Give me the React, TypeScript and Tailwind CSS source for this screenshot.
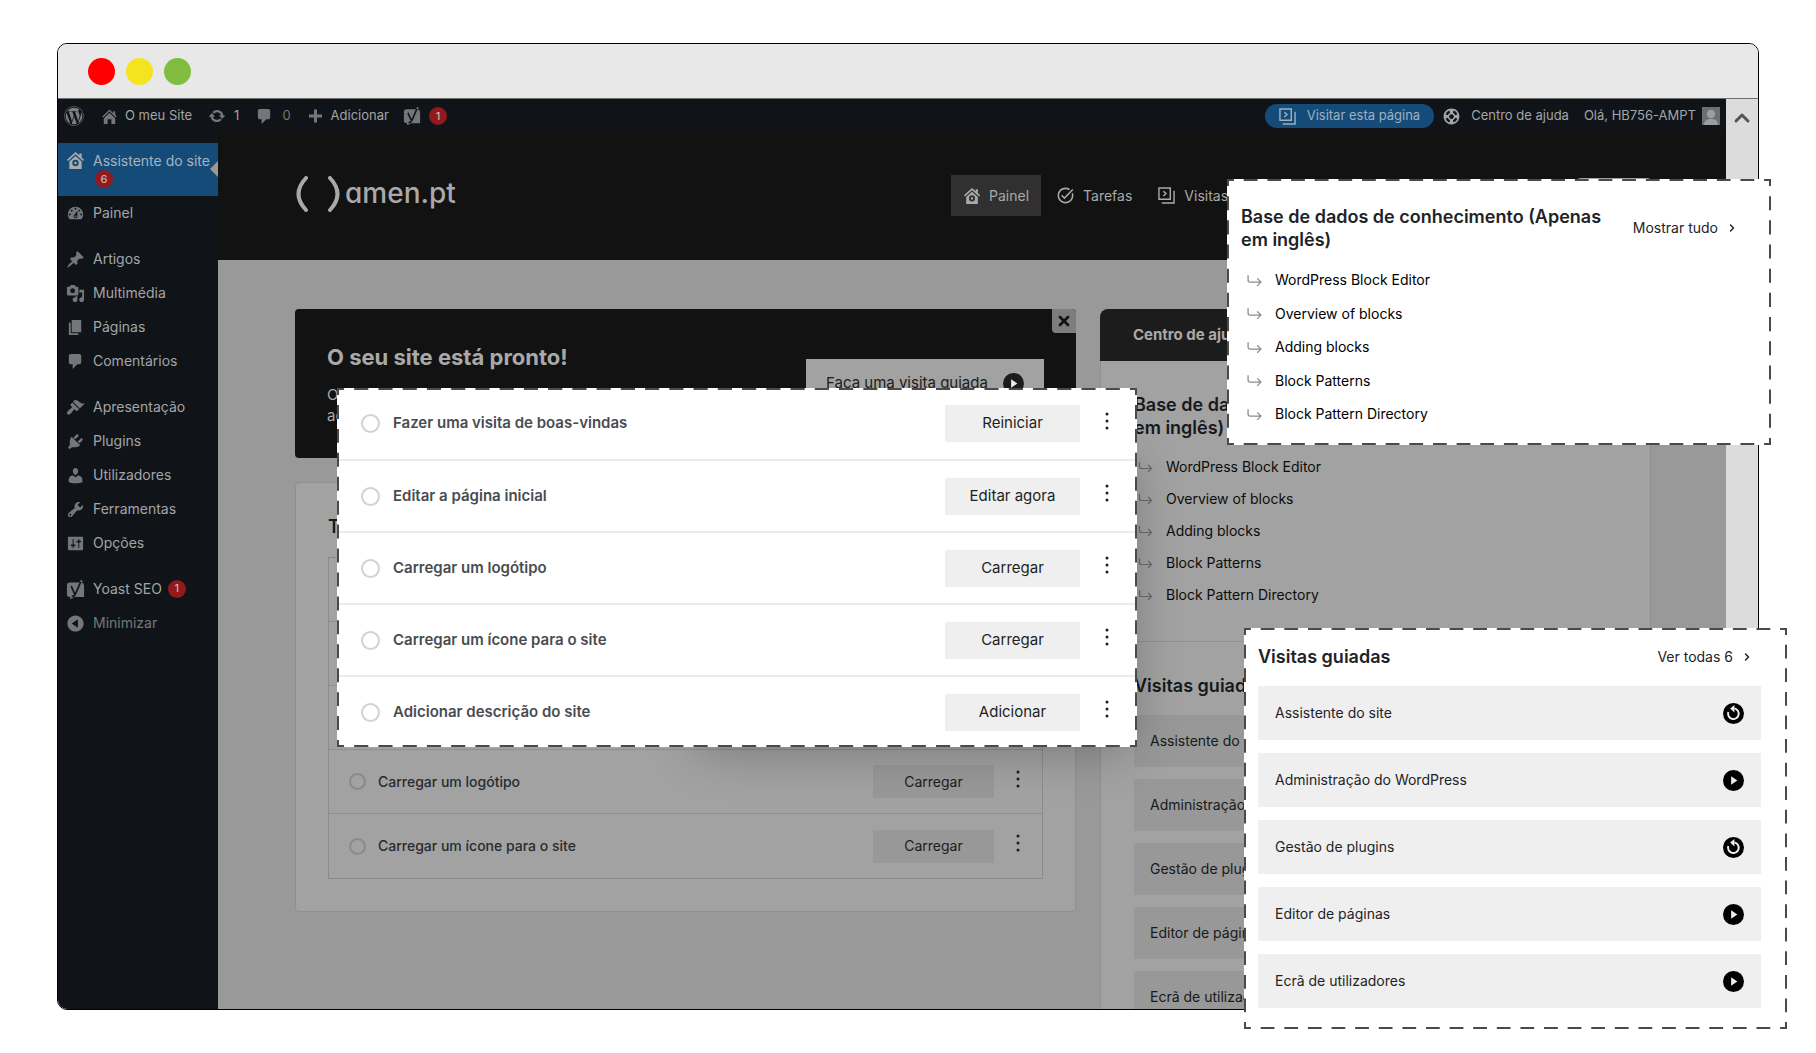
import type { ReactNode } from "react";
import { ChevronRight, ChevronUp, X } from "lucide-react";
import { FaWordpress } from "react-icons/fa";
import { MdSupport, MdTaskAlt } from "react-icons/md";

type IconProps = { className?: string };

const GLYPHS = {
  dashboard:
    "M3.76 16h12.48c1.1-1.37 1.76-3.11 1.76-5 0-4.42-3.58-8-8-8s-8 3.58-8 8c0 1.89.66 3.63 1.76 5zM10 4c.55 0 1 .45 1 1s-.45 1-1 1-1-.45-1-1 .45-1 1-1zM6 6c.55 0 1 .45 1 1s-.45 1-1 1-1-.45-1-1 .45-1 1-1zm8 0c.55 0 1 .45 1 1s-.45 1-1 1-1-.45-1-1 .45-1 1-1zm-5.37 5.55L12 7v6c0 1.1-.9 2-2 2s-2-.9-2-2c0-.57.24-1.08.63-1.45zM4 10c.55 0 1 .45 1 1s-.45 1-1 1-1-.45-1-1 .45-1 1-1zm12 0c.55 0 1 .45 1 1s-.45 1-1 1-1-.45-1-1 .45-1 1-1zm-5 3c0-.55-.45-1-1-1s-1 .45-1 1 .45 1 1 1 1-.45 1-1z",
  post: "M10.44 3.02l1.82-1.82 6.36 6.35-1.83 1.82c-1.05-.68-2.48-.57-3.41.36l-.75.75c-.92.93-1.04 2.35-.35 3.41l-1.83 1.82-2.41-2.41-2.8 2.79c-.42.42-3.38 2.71-3.8 2.29s1.86-3.39 2.28-3.81l2.79-2.79L4.1 9.36l1.83-1.82c1.05.69 2.48.57 3.4-.36l.75-.75c.93-.92 1.05-2.35.36-3.41z",
  media:
    "M13 11V4c0-.55-.45-1-1-1h-1.67L9 1H5L3.67 3H2c-.55 0-1 .45-1 1v7c0 .55.45 1 1 1h10c.55 0 1-.45 1-1zM7 4.5c1.38 0 2.5 1.12 2.5 2.5S8.38 9.5 7 9.5 4.5 8.38 4.5 7 5.62 4.5 7 4.5zM14 6h5v10.5c0 1.38-1.12 2.5-2.5 2.5S14 17.88 14 16.5s1.12-2.5 2.5-2.5c.17 0 .34.02.5.05V9h-3V6zm-4 8.05V13h2v3.5c0 1.38-1.12 2.5-2.5 2.5S7 17.88 7 16.5 8.12 14 9.5 14c.17 0 .34.02.5.05z",
  page: "M6 15V2h10v13H6zm-1 1h8v2H3V5h2v11z",
  comment:
    "M5 2h9c1.1 0 2 .9 2 2v7c0 1.1-.9 2-2 2h-2l-5 5v-5H5c-1.1 0-2-.9-2-2V4c0-1.1.9-2 2-2z",
  brush:
    "M14.48 11.06L7.41 3.99l1.5-1.5c.5-.56 2.3-.47 3.51.32 1.21.8 1.43 1.28 2.91 2.1 1.18.64 2.45 1.26 4.45.85zm-.71.71L6.7 4.7 4.93 6.47c-.39.39-.39 1.02 0 1.41l1.06 1.06c.39.39.39 1.03 0 1.42-.6.6-1.43 1.11-2.21 1.69-.35.26-.7.53-1.01.84C1.43 14.23.4 16.08 1.4 17.07c.99 1 2.84-.03 4.18-1.36.31-.31.58-.66.85-1.02.57-.78 1.08-1.61 1.69-2.21.39-.39 1.02-.39 1.41 0l1.06 1.06c.39.39 1.02.39 1.41 0z",
  plug: "M13.11 4.36L9.87 7.6 8 5.73l3.24-3.24c.35-.34 1.05-.2 1.56.32.52.51.66 1.21.31 1.55zm-8 1.77l.91-1.12 9.01 9.01-1.19.84c-.71.71-2.63 1.16-3.82 1.16H6.14L4.9 17.26c-.59.59-1.54.59-2.12 0-.59-.58-.59-1.53 0-2.12l1.24-1.24v-3.88c0-1.13.4-3.19 1.09-3.89zm7.26 3.97l3.24-3.24c.34-.35 1.04-.21 1.55.31.52.51.66 1.21.31 1.55l-3.24 3.25z",
  user: "M10 9.25c-2.27 0-2.73-3.44-2.73-3.44C7 4.02 7.82 2 9.97 2c2.16 0 2.98 2.02 2.71 3.81 0 0-.41 3.44-2.68 3.44zm0 2.57L12.72 10c2.39 0 4.52 2.33 4.52 4.53v2.49s-3.65 1.13-7.24 1.13c-3.65 0-7.24-1.13-7.24-1.13v-2.49c0-2.25 1.94-4.48 4.47-4.48z",
  wrench:
    "M16.68 9.77c-1.34 1.34-3.3 1.67-4.95.99l-5.41 6.52c-.99.99-2.59.99-3.58 0s-.99-2.59 0-3.57l6.52-5.42c-.68-1.65-.35-3.61.99-4.95 1.28-1.28 3.12-1.62 4.72-1.06l-2.89 2.89 2.82 2.82 2.86-2.87c.53 1.58.18 3.39-1.08 4.65zM3.81 16.21c.4.39 1.04.39 1.43 0 .4-.4.4-1.04 0-1.43-.39-.4-1.03-.4-1.43 0-.39.39-.39 1.03 0 1.43z",
  sliders:
    "M18 16V4c0-.55-.45-1-1-1H3c-.55 0-1 .45-1 1v12c0 .55.45 1 1 1h14c.55 0 1-.45 1-1zM8 11h1c.55 0 1 .45 1 1s-.45 1-1 1H8v1.5c0 .28-.22.5-.5.5s-.5-.22-.5-.5V13H6c-.55 0-1-.45-1-1s.45-1 1-1h1V5.5c0-.28.22-.5.5-.5s.5.22.5.5V11zm5-2h-1c-.55 0-1-.45-1-1s.45-1 1-1h1V5.5c0-.28.22-.5.5-.5s.5.22.5.5V7h1c.55 0 1 .45 1 1s-.45 1-1 1h-1v5.5c0 .28-.22.5-.5.5s-.5-.22-.5-.5V9z",
  collapse:
    "M10 1.500c4.690 0 8.500 3.810 8.500 8.500s-3.810 8.500-8.500 8.500S1.500 14.690 1.500 10 5.310 1.500 10 1.500zM12.500 5.500L6 10l6.500 4.500z",
  update:
    "M10.2 3.28c3.53 0 6.43 2.61 6.92 6h2.08l-3.5 4-3.5-4h2.32c-.45-1.97-2.21-3.45-4.32-3.45-1.45 0-2.73.71-3.54 1.78L4.95 5.66C6.23 4.2 8.11 3.28 10.2 3.28zm-.4 13.44c-3.52 0-6.43-2.61-6.92-6H.8l3.5-4c1.17 1.33 2.33 2.67 3.5 4H5.48c.45 1.97 2.21 3.45 4.32 3.45 1.45 0 2.73-.71 3.54-1.78l1.71 1.95c-1.28 1.46-3.15 2.38-5.25 2.38z",
  plus: "M17 8.500v3h-5v5H9v-5H4v-3h5v-5h3v5h5z",
  home: "M16 8.500l1.530 1.530-1.060 1.060L10 4.600l-6.470 6.490-1.060-1.060L10 2.500l4 4v-2h2v4zm-6-2.460l6 5.990V18h-4v-5H8v5H4v-5.970z",
  assistant:
    "M10 1l4 3.600V2.500h2.500v4.300L19 9.200l-1.200 1.300L10 3.500l-7.800 7L1 9.200zM10 5.200l6.500 5.800v8h-13v-8zM10 9.300a3.400 3.400 0 1 0 0 6.800 3.400 3.400 0 0 0 0-6.800zM10 11.400a1.300 1.300 0 1 1 0 2.600 1.300 1.300 0 0 1 0-2.600z",
};

type GlyphName = keyof typeof GLYPHS;

function Glyph({ name, className }: { name: GlyphName; className?: string }) {
  return (
    <svg viewBox="0 0 20 20" className={className} fill="currentColor" aria-hidden="true">
      <path fillRule="evenodd" d={GLYPHS[name]} />
    </svg>
  );
}

function YoastIcon({ className }: IconProps) {
  return (
    <svg viewBox="0 0 20 20" className={className} aria-hidden="true">
      <path
        d="M4 2.500h10.500L15.500 0l2 .600L16.800 3Q19 3.200 19 6v12H8.500q-1.500 2-4 2v-2Q1 18 1 15V5.500q0-3 3-3z"
        fill="currentColor"
      />
      <path
        d="M5.500 6.500l3.500 8M15.500 2l-5.500 12.500Q8.500 17.500 6 17.500"
        fill="none"
        stroke="#101418"
        strokeWidth="1.800"
      />
    </svg>
  );
}

function TourIcon({ className }: IconProps) {
  return (
    <svg viewBox="0 0 18 18" className={className} fill="none" stroke="currentColor" strokeWidth="1.500" aria-hidden="true">
      <path d="M1 1h12v12H1zM17 4v13H4M5.700 4.500L8.500 7l-2.800 2.500" />
    </svg>
  );
}

function ElbowArrow({ className }: IconProps) {
  return (
    <svg viewBox="0 0 14 12" className={className} fill="none" stroke="currentColor" strokeWidth="1.200" aria-hidden="true">
      <path d="M1 1v4.500q0 2 2 2h10M9.500 4L13 7.500 9.500 11" />
    </svg>
  );
}

function PlayIcon({ className }: IconProps) {
  return (
    <svg viewBox="0 0 22 22" className={className} aria-hidden="true">
      <circle cx="11" cy="11" r="11" fill="currentColor" />
      <path d="M8.500 6.500l6.500 4.500-6.500 4.500z" fill="#eee" />
    </svg>
  );
}

function ReplayIcon({ className }: IconProps) {
  return (
    <svg viewBox="0 0 22 22" className={className} aria-hidden="true">
      <circle cx="11" cy="11" r="11" fill="currentColor" />
      <path d="M5.500 9.500a5.600 5.600 0 1 0 6.500-3.800" fill="none" stroke="#eee" strokeWidth="2" />
      <path d="M12 2L7.500 5.800 12 10z" fill="#eee" />
    </svg>
  );
}

// Short lines where two sides meet, so every corner shows as an L.
function DashedFrame({ cols, rows }: { cols: number; rows: number }) {
  const side = {
    stroke: "#4a4a4a",
    strokeWidth: 4,
    strokeDasharray: "14 10",
    strokeDashoffset: 7,
  };
  return (
    <svg className="pointer-events-none absolute inset-0 h-full w-full" aria-hidden="true">
      <line x1="0" y1="0" x2="100%" y2="0" pathLength={cols * 24} {...side} />
      <line x1="0" y1="100%" x2="100%" y2="100%" pathLength={cols * 24} {...side} />
      <line x1="0" y1="0" x2="0" y2="100%" pathLength={rows * 24} {...side} />
      <line x1="100%" y1="0" x2="100%" y2="100%" pathLength={rows * 24} {...side} />
    </svg>
  );
}

function Badge({ children }: { children: ReactNode }) {
  return (
    <span className="inline-flex h-[18px] w-[18px] items-center justify-center rounded-full bg-[#92191c] text-[11px] font-medium text-[#c4b5b5]">
      {children}
    </span>
  );
}

function DotsIcon() {
  return (
    <svg viewBox="0 0 4 18" className="h-[18px] w-1" fill="currentColor" aria-hidden="true">
      <circle cx="2" cy="2" r="1.500" />
      <circle cx="2" cy="9" r="1.500" />
      <circle cx="2" cy="16" r="1.500" />
    </svg>
  );
}

const MENU: { icon: GlyphName; label: string }[][] = [
  [
    { icon: "post", label: "Artigos" },
    { icon: "media", label: "Multimédia" },
    { icon: "page", label: "Páginas" },
    { icon: "comment", label: "Comentários" },
  ],
  [
    { icon: "brush", label: "Apresentação" },
    { icon: "plug", label: "Plugins" },
    { icon: "user", label: "Utilizadores" },
    { icon: "wrench", label: "Ferramentas" },
    { icon: "sliders", label: "Opções" },
  ],
];

const TASKS = [
  { label: "Fazer uma visita de boas-vindas", action: "Reiniciar" },
  { label: "Editar a página inicial", action: "Editar agora" },
  { label: "Carregar um logótipo", action: "Carregar" },
  { label: "Carregar um ícone para o site", action: "Carregar" },
  { label: "Adicionar descrição do site", action: "Adicionar" },
];

const ARTICLES = [
  "WordPress Block Editor",
  "Overview of blocks",
  "Adding blocks",
  "Block Patterns",
  "Block Pattern Directory",
];

const TOURS = [
  { label: "Assistente do site", done: true },
  { label: "Administração do WordPress", done: false },
  { label: "Gestão de plugins", done: true },
  { label: "Editor de páginas", done: false },
  { label: "Ecrã de utilizadores", done: false },
];

function AdminBar() {
  return (
    <div className="flex h-8 items-center justify-between bg-[#101418] px-1.5 pt-0.5 text-[13px] text-[#a3a5a7]">
      <div className="flex items-center">
        <a href="#wp" aria-label="WordPress">
          <FaWordpress className="h-5 w-5 text-[#7d8083]" />
        </a>
        <a href="#site" className="ml-4 flex items-center gap-1.5">
          <Glyph name="home" className="h-[19px] w-[19px] text-[#74777a]" />
          O meu Site
        </a>
        <a href="#atualizar" className="ml-4 flex items-center gap-2">
          <Glyph name="update" className="h-[18px] w-[18px] text-[#74777a]" />1
        </a>
        <a href="#comentarios" className="ml-4 flex items-center gap-2 text-[#74777a]">
          <Glyph name="comment" className="h-[19px] w-[19px]" />0
        </a>
        <a href="#novo" className="ml-3.5 flex items-center gap-1.5">
          <Glyph name="plus" className="h-5 w-5 text-[#74777a]" />
          Adicionar
        </a>
        <a href="#yoast" className="ml-3.5 flex items-center gap-2">
          <YoastIcon className="h-[18px] w-[18px] text-[#74777a]" />
          <Badge>1</Badge>
        </a>
      </div>
      <div className="flex items-center">
        <a
          href="#visitar"
          className="flex h-6 items-center gap-[11px] rounded-full bg-[#154b78] px-3.5 text-[#9fb0c0]"
        >
          <TourIcon className="h-[17px] w-[17px]" />
          Visitar esta página
        </a>
        <a href="#ajuda" className="ml-2 flex items-center gap-2.5">
          <MdSupport className="h-[19px] w-[19px]" />
          Centro de ajuda
        </a>
        <a href="#perfil" className="ml-[15px] flex items-center gap-1.5">
          Olá, HB756-AMPT
          <svg viewBox="0 0 18 18" className="h-[18px] w-[18px]" aria-hidden="true">
            <path d="M0 0h18v18H0z" fill="#6c6f72" />
            <circle cx="9" cy="7" r="4.200" fill="#9b9d9f" />
            <path d="M2 18q0-5 5-6h4q5 1 5 6z" fill="#9b9d9f" />
          </svg>
        </a>
      </div>
    </div>
  );
}

function MenuLink({ icon, label }: { icon: ReactNode; label: string }) {
  return (
    <a href={`#${label}`} className="flex h-[34px] items-center gap-2 pl-2 text-[#74777a]">
      {icon}
      <span className="text-[#a3a5a7]">{label}</span>
    </a>
  );
}

function SideMenu() {
  return (
    <nav className="flex w-[160px] shrink-0 flex-col gap-3 bg-[#101418] pt-3 text-sm">
      <div>
        <a
          href="#assistente"
          className="relative flex h-[53px] gap-2 bg-[#154b78] pt-2 pl-2 text-[#a6b3bf]"
        >
          <Glyph name="assistant" className="h-[19px] w-[19px] shrink-0 text-[#a9aaab]" />
          <span className="leading-[19px] whitespace-nowrap">
            Assistente do site
            <span className="ml-0.5 flex">
              <Badge>6</Badge>
            </span>
          </span>
          <span className="absolute top-[18px] right-0 border-y-8 border-r-8 border-y-transparent border-r-[#999]" />
        </a>
        <MenuLink icon={<Glyph name="dashboard" className="h-[19px] w-[19px]" />} label="Painel" />
      </div>
      {MENU.map((group) => (
        <div key={group[0].label}>
          {group.map((item) => (
            <MenuLink
              key={item.label}
              icon={<Glyph name={item.icon} className="h-[19px] w-[19px]" />}
              label={item.label}
            />
          ))}
        </div>
      ))}
      <div>
        <div className="flex items-center gap-1.5">
          <MenuLink icon={<YoastIcon className="h-[19px] w-[19px]" />} label="Yoast SEO" />
          <Badge>1</Badge>
        </div>
        <button type="button" className="flex h-[34px] items-center gap-2 pl-2 text-[#74777a]">
          <Glyph name="collapse" className="h-[19px] w-[19px]" />
          Minimizar
        </button>
      </div>
    </nav>
  );
}

function PageHeader() {
  return (
    <header className="flex h-[129px] items-center justify-between bg-[#121212] pr-[75px] pl-[77px]">
      <a href="#amen" className="mb-1 flex items-center gap-1 text-[#a9a9a9]">
        <svg
          viewBox="0 0 46 36"
          className="h-9 w-[46px]"
          fill="none"
          stroke="currentColor"
          strokeWidth="4"
          aria-hidden="true"
        >
          <path d="M11 2Q-4 18 11 34M35 2q15 16 0 32" strokeLinecap="round" />
        </svg>
        <span className="pb-0.5 text-[28px] leading-8 font-medium [font-feature-settings:'cv11']">
          amen.pt
        </span>
      </a>
      <nav className="flex w-[700px] items-center text-sm text-[#a9a9a9]">
        <a href="#painel" className="flex h-[41px] items-center gap-2 bg-[#303030] px-3">
          <Glyph name="assistant" className="h-[18px] w-[18px]" />
          Painel
        </a>
        <a href="#tarefas" className="ml-[15px] flex items-center gap-2">
          <MdTaskAlt className="h-[19px] w-[19px]" />
          Tarefas
        </a>
        <a href="#visitas" className="ml-[26px] flex items-center gap-[9px] whitespace-nowrap">
          <TourIcon className="h-[17px] w-[17px]" />
          Visitas guiadas
        </a>
        <button type="button" aria-label="Sair" className="ml-auto h-9 w-[74px] rounded-sm bg-[#a2a2a2]" />
      </nav>
    </header>
  );
}

function WelcomeBanner() {
  return (
    <section className="relative h-[149px] rounded bg-[#121212] text-[#a9a9a9]">
      <button
        type="button"
        aria-label="Fechar"
        className="absolute top-0 right-0 flex h-6 w-6 items-center justify-center rounded-tr rounded-bl bg-[#7d7d7d] text-[#121212]"
      >
        <X className="h-4 w-4" strokeWidth={4} />
      </button>
      <div className="flex items-start justify-between px-8">
        <div className="pt-[33px]">
          <h1 className="text-[22px] leading-[30px] font-bold">O seu site está pronto!</h1>
          <p className="mt-3 text-[15px] leading-[21px]">
            Obtenha ajuda
            <br />
            aceda às tarefas
          </p>
        </div>
        <button
          type="button"
          className="mt-[50px] flex h-12 w-[238px] items-center justify-between bg-[#a2a2a2] px-5 text-[15px] text-[#1c1c1c]"
        >
          Faça uma visita guiada
          <PlayIcon className="h-[21px] w-[21px]" />
        </button>
      </div>
    </section>
  );
}

function TaskCard() {
  // The first three rows stay under the floating panel.
  const rows = ["", "", "", TASKS[2].label, TASKS[3].label];

  return (
    <section className="mt-6 rounded border border-[#8f8f8f] bg-[#a2a2a2] px-8 pt-8 pb-8">
      <h2 className="text-lg leading-6 font-semibold text-[#17191b]">Tarefas</h2>
      <ul className="mt-[18px] border border-[#8c8c8c] text-sm">
        {rows.map((label, i) => (
          <li
            key={i}
            className="flex h-16 items-center border-b border-[#8f8f8f] pr-[22px] pl-5 last:border-b-0"
          >
            {label && (
              <>
                <label className="flex flex-1 items-center gap-3 font-medium text-[#282b2e]">
                  <input
                    type="radio"
                    className="h-[17px] w-[17px] appearance-none rounded-full border-2 border-[#8a8a8a]"
                  />
                  {label}
                </label>
                <button type="button" className="h-[33px] w-[121px] bg-[#989898] text-[#1c1c1c]">
                  Carregar
                </button>
                <button type="button" aria-label="Mais opções" className="mb-1.5 ml-[22px] text-[#1c1c1c]">
                  <DotsIcon />
                </button>
              </>
            )}
          </li>
        ))}
      </ul>
    </section>
  );
}

function HelpColumn() {
  return (
    <aside className="w-[551px] shrink-0">
      <h2 className="flex h-[52px] items-center rounded-t-lg bg-[#1c1c1c] pl-[33px] text-[15px] font-bold text-[#a9a9a9]">
        Centro de ajuda
      </h2>
      <div className="h-full border-x border-[#8f8f8f] bg-[#a2a2a2]">
        <div className="h-[281px] border-b border-[#8f8f8f] pt-8 pl-[33px]">
          <h3 className="w-[370px] text-lg leading-[23px] font-semibold text-[#17191b]">
            Base de dados de conhecimento (Apenas em inglês)
          </h3>
          <ul className="mt-3 text-sm text-[#0c0c0c]">
            {ARTICLES.map((title) => (
              <li key={title}>
                <a href={`#${title}`} className="flex h-8 items-center gap-[13px] pl-1">
                  <ElbowArrow className="h-3 w-[15px] text-[#6a6a6a]" />
                  {title}
                </a>
              </li>
            ))}
          </ul>
        </div>
        <div className="px-[33px] pt-8">
          <h3 className="text-lg leading-6 font-semibold text-[#17191b]">Visitas guiadas</h3>
          <ul className="mt-[17px] flex flex-col gap-3 text-sm text-[#17191b]">
            {TOURS.map((tour) => (
              <li key={tour.label}>
                <a href={`#${tour.label}`} className="flex h-[52px] items-center bg-[#989898] pl-4">
                  {tour.label}
                </a>
              </li>
            ))}
          </ul>
        </div>
      </div>
    </aside>
  );
}

function BrowserWindow() {
  return (
    <div className="flex h-full flex-col overflow-hidden rounded-[10px] border border-black">
      <div className="flex h-[54px] shrink-0 items-center gap-[11px] bg-[#e8e8e8] pl-[30px]">
        <span className="h-[27px] w-[27px] rounded-full bg-[#ff0000]" />
        <span className="h-[27px] w-[27px] rounded-full bg-[#f4e420]" />
        <span className="h-[27px] w-[27px] rounded-full bg-[#80bc40]" />
      </div>
      <div className="flex min-h-0 flex-1 border-t border-[#6e6e6e]">
        <div className="flex min-w-0 flex-1 flex-col">
          <AdminBar />
          <div className="flex min-h-0 flex-1">
            <SideMenu />
            <div className="min-w-0 flex-1 overflow-hidden bg-[#999]">
              <PageHeader />
              <main className="flex gap-6 pt-[49px] pr-[75px] pl-[77px]">
                <div className="min-w-0 flex-1">
                  <WelcomeBanner />
                  <TaskCard />
                </div>
                <HelpColumn />
              </main>
            </div>
          </div>
        </div>
        <div className="flex w-8 shrink-0 justify-center bg-[#dcdcdc] pt-[7px] text-[#555]">
          <ChevronUp className="h-6 w-6" strokeWidth={3} />
        </div>
      </div>
    </div>
  );
}

function TasksPanel() {
  return (
    <section className="absolute top-[388px] left-[337px] w-[800px]">
      <div className="absolute top-12 right-2 bottom-6 w-[430px] shadow-[0_24px_48px_rgba(0,0,0,0.3)]" />
      <ul className="relative bg-white">
        {TASKS.map((task) => (
          <li
            key={task.label}
            className="flex h-[72px] items-center border-t-2 border-[#ececec] pr-7 pl-6 first:h-[71px] first:border-t-0"
          >
            <label className="flex flex-1 items-center gap-[13px] text-[15px] font-semibold text-[#484c51]">
              <input
                type="radio"
                className="h-[19px] w-[19px] appearance-none rounded-full border-2 border-[#d2d2d2]"
              />
              {task.label}
            </label>
            <button type="button" className="h-[37px] w-[135px] bg-[#efefef] text-[15px] text-[#1d1f21]">
              {task.action}
            </button>
            <button type="button" aria-label="Mais opções" className="mb-1.5 ml-[25px] text-[#1d1f21]">
              <DotsIcon />
            </button>
          </li>
        ))}
      </ul>
      <DashedFrame cols={33} rows={15} />
    </section>
  );
}

function KnowledgePanel() {
  return (
    <section className="absolute top-[179px] right-[45px] flex h-[266px] w-[544px] flex-col bg-white pt-[26px] pb-4">
      <div className="flex items-center justify-between pr-[33px] pl-[14px]">
        <h2 className="w-[376px] text-lg leading-[23px] font-semibold text-[#1d2327]">
          Base de dados de conhecimento (Apenas em inglês)
        </h2>
        <a href="#mostrar-tudo" className="flex items-center gap-2 text-sm text-[#1d2327]">
          Mostrar tudo
          <ChevronRight className="h-3 w-3" strokeWidth={3} />
        </a>
      </div>
      <ul className="mt-[14px] flex flex-1 flex-col justify-between pl-5 text-sm text-black">
        {ARTICLES.map((title) => (
          <li key={title}>
            <a href={`#${title}`} className="flex h-[30px] items-center gap-[13px]">
              <ElbowArrow className="h-[13px] w-[15px] text-[#8c8c8c]" />
              {title}
            </a>
          </li>
        ))}
      </ul>
      <DashedFrame cols={23} rows={11} />
    </section>
  );
}

function ToursPanel() {
  return (
    <section className="absolute top-[628px] right-[29px] w-[543px] bg-white px-[14px] pt-[17px] pb-[21px]">
      <div className="flex h-6 items-center justify-between pr-5">
        <h2 className="text-lg leading-6 font-semibold text-[#1d2327]">Visitas guiadas</h2>
        <a href="#ver-todas" className="flex items-center gap-2 text-sm text-[#1d2327]">
          Ver todas 6
          <ChevronRight className="h-3 w-3" strokeWidth={3} />
        </a>
      </div>
      <ul className="mt-[17px] mr-3 flex flex-col gap-[13px] text-sm text-[#1d2327]">
        {TOURS.map((tour) => (
          <li key={tour.label}>
            <button
              type="button"
              className="flex h-[54px] w-full items-center justify-between bg-[#efefef] px-[17px]"
            >
              {tour.label}
              {tour.done ? (
                <ReplayIcon className="h-[21px] w-[21px] text-black" />
              ) : (
                <PlayIcon className="h-[21px] w-[21px] text-black" />
              )}
            </button>
          </li>
        ))}
      </ul>
      <DashedFrame cols={23} rows={17} />
    </section>
  );
}

export default function App() {
  return (
    <div className="relative h-screen overflow-hidden bg-white font-['Inter','Liberation_Sans',sans-serif]">
      <div className="absolute inset-x-[57px] top-[43px] bottom-[43px]">
        <BrowserWindow />
      </div>
      <TasksPanel />
      <KnowledgePanel />
      <ToursPanel />
    </div>
  );
}
